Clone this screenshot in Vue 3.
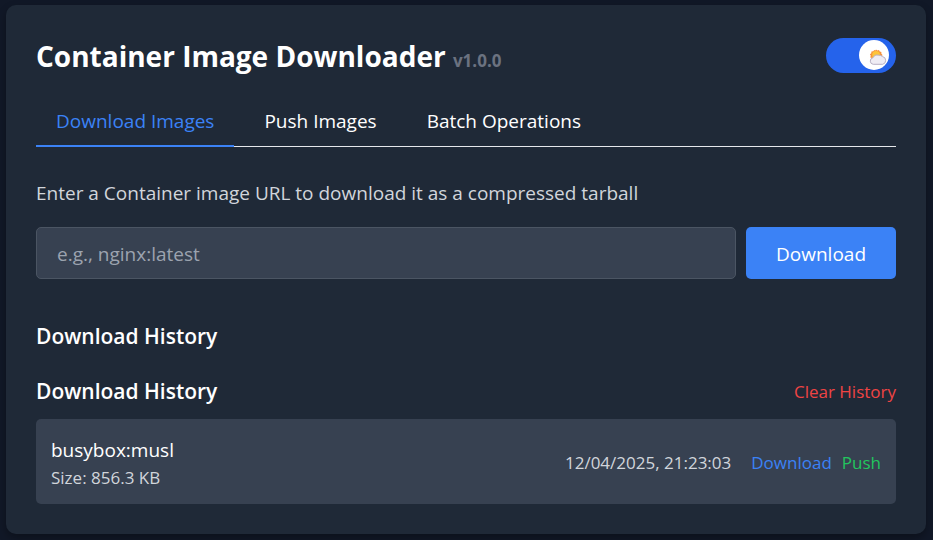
<script setup>
import { ref } from 'vue'

const tabs = ['Download Images', 'Push Images', 'Batch Operations']
const activeTab = ref(tabs[0])
const darkMode = ref(true)
const imageUrl = ref('')
const history = ref([
  { name: 'busybox:musl', size: '856.3 KB', date: '12/04/2025, 21:23:03' },
])
</script>

<template>
  <main class="card">
    <header class="header">
      <h1 class="title">Container Image Downloader <span class="version">v1.0.0</span></h1>
      <label class="switch">
        <input v-model="darkMode" class="switch-input" type="checkbox" aria-label="Dark mode" />
        <span class="knob">
          <svg class="weather" viewBox="0 0 18 16" aria-hidden="true">
            <path
              d="M7 0.4 8.3 1.6 10 1 10.7 2.5 12.4 2.9 12.3 4.6 13.5 6 12.3 9H3L1 8.2 1.9 6.9 0.9 5.3 2.3 4.2 2.4 2.4 4.3 2.3 5.3 0.9 6.4 1.6Z"
              fill="#f7923a"
            />
            <circle cx="7.1" cy="6" r="3.9" fill="#fdc43b" />
            <path
              d="M4.2 15.3A3.3 3.3 0 0 1 3.9 8.8 5 5 0 0 1 9.6 6.2a4.6 4.6 0 0 1 3.8 1.3 4 4 0 0 1 .3 7.8Z"
              fill="#efecf4"
              stroke="#b8b0c4"
              stroke-width="1"
            />
          </svg>
        </span>
      </label>
    </header>

    <nav class="tabs">
      <button
        v-for="tab in tabs"
        :key="tab"
        type="button"
        class="tab"
        :class="{ active: tab === activeTab }"
        @click="activeTab = tab"
      >
        {{ tab }}
      </button>
    </nav>

    <form class="download" @submit.prevent>
      <label class="hint" for="image-url">Enter a Container image URL to download it as a compressed tarball</label>
      <div class="fields">
        <input id="image-url" v-model="imageUrl" class="url" type="text" placeholder="e.g., nginx:latest" />
        <button class="submit" type="submit">Download</button>
      </div>
    </form>

    <section class="history">
      <h2 class="heading">Download History</h2>
      <div class="history-bar">
        <h2 class="heading">Download History</h2>
        <button type="button" class="action danger" @click="history = []">Clear History</button>
      </div>
      <ul class="list">
        <li v-for="item in history" :key="item.name" class="item">
          <div class="info">
            <span class="name">{{ item.name }}</span>
            <span class="meta">Size: {{ item.size }}</span>
          </div>
          <div class="side">
            <span class="meta">{{ item.date }}</span>
            <div class="actions">
              <button type="button" class="action primary">Download</button>
              <button type="button" class="action success">Push</button>
            </div>
          </div>
        </li>
      </ul>
    </section>
  </main>
</template>

<style>
body {
  background: #111827;
}
</style>

<style scoped>
.card {
  margin: 5px 7px 6px 6px;
  padding: 30px;
  border-radius: 10px;
  background: #1f2937;
  box-shadow: 0 4px 8px rgba(0, 0, 0, 0.3);
  color: #fff;
  font-family: "Segoe UI", "Open Sans", sans-serif;
  font-size: 19px;
  line-height: 28px;
}

.card,
.card * {
  box-sizing: border-box;
}

button,
input {
  font: inherit;
}

button {
  padding: 0;
  border: 0;
  background: none;
  color: inherit;
  cursor: pointer;
}

h1,
h2,
ul {
  margin: 0;
  padding: 0;
}

.header {
  display: flex;
  align-items: center;
  justify-content: space-between;
  height: 41px;
}

.title {
  padding-top: 5px;
  font-size: 28px;
  font-weight: 700;
}

.version {
  color: #6b7280;
  font-size: 17px;
}

.switch {
  position: relative;
  flex: none;
  width: 70px;
  height: 35px;
  cursor: pointer;
}

.switch-input {
  appearance: none;
  display: block;
  width: 100%;
  height: 100%;
  margin: 0;
  border-radius: 35px;
  background: #4b5563;
}

.switch-input:checked {
  background: #2563eb;
}

.knob {
  position: absolute;
  top: 2px;
  left: 7px;
  display: flex;
  align-items: center;
  justify-content: flex-end;
  width: 30px;
  height: 30px;
  padding: 3px 2px 0 0;
  border-radius: 50%;
  background: #fff;
  pointer-events: none;
}

.switch-input:checked + .knob {
  left: 33px;
}

.weather {
  width: 18px;
  height: 16px;
}

.tabs {
  display: flex;
  gap: 10px;
  margin-top: 21px;
  border-bottom: 1px solid #e5e7eb;
}

.tab {
  margin-bottom: -1px;
  padding: 10px 20px;
  border-bottom: 2px solid transparent;
}

.tab.active {
  border-color: #3b82f6;
  color: #3b82f6;
}

.download {
  margin-top: 32px;
}

.hint {
  display: block;
  margin-bottom: 20px;
  color: #d1d5db;
}

.fields {
  display: flex;
  gap: 10px;
}

.url {
  flex: 1;
  min-width: 0;
  height: 52px;
  padding: 12px 20px 10px;
  border: 1px solid #4b5563;
  border-radius: 5px;
  background: #374151;
  color: #fff;
}

.url::placeholder {
  color: #9ca3af;
}

.submit {
  width: 150px;
  padding-top: 2px;
  border-radius: 5px;
  background: #3b82f6;
}

.history {
  margin-top: 40px;
}

.heading {
  font-size: 21px;
  font-weight: 600;
  line-height: 35px;
}

.history-bar {
  display: flex;
  align-items: center;
  justify-content: space-between;
  margin: 20px 0 10px;
}

.list {
  list-style: none;
}

.item {
  display: flex;
  align-items: center;
  justify-content: space-between;
  padding: 16px 15px 14px;
  border-radius: 5px;
  background: #374151;
}

.info {
  display: flex;
  flex-direction: column;
}

.name {
  line-height: 30px;
}

.meta,
.action {
  font-size: 17px;
  line-height: 25px;
}

.meta {
  color: #d1d5db;
}

.side {
  display: flex;
  align-items: center;
  gap: 20px;
}

.actions {
  display: flex;
  gap: 10px;
}

.primary {
  color: #3b82f6;
}

.success {
  color: #22c55e;
}

.danger {
  color: #ef4444;
}
</style>
